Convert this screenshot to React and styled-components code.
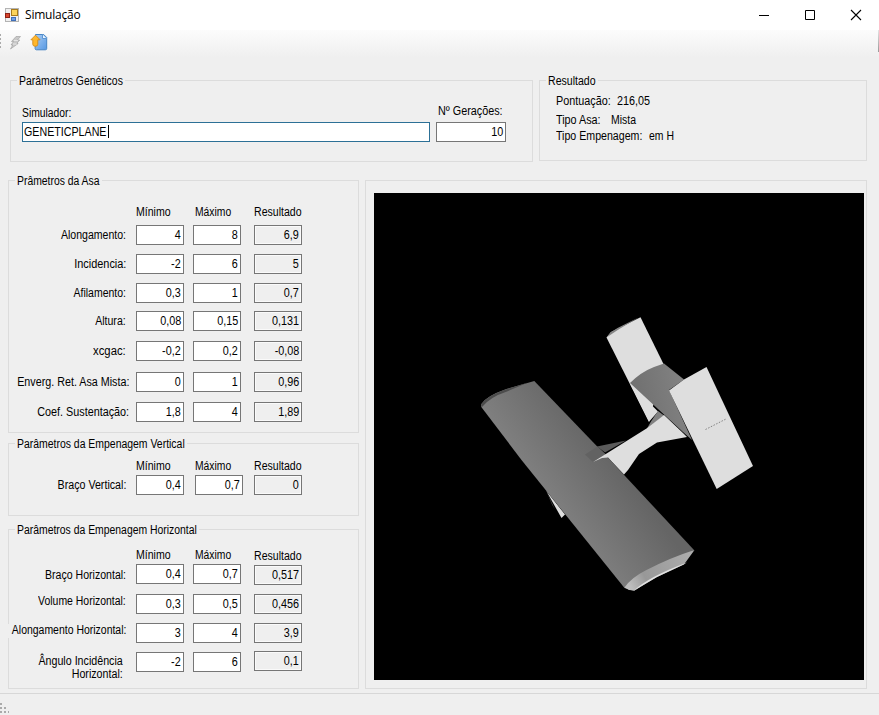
import React from "react";
import styled, { createGlobalStyle } from "styled-components";

const GlobalStyle = createGlobalStyle`
  * { box-sizing: border-box; }
  body { margin: 0; background: #efefef; overflow: hidden; }
`;

const Window = styled.div`
  width: 879px;
  height: 715px;
  display: flex;
  flex-direction: column;
  background: #efefef;
  color: #000;
  font: 12px/14px "Liberation Sans", Arial, sans-serif;
  white-space: pre;
`;

const TitleBar = styled.header`
  height: 30px;
  flex: none;
  display: flex;
  align-items: center;
  padding: 0 17px 1px 5px;
  background: #fff;
`;

const Title = styled.h1`
  margin: 1px 0 0 6px;
  flex: 1;
  font: 400 12px/16px "Open Sans", "Noto Sans", sans-serif;
  letter-spacing: -0.2px;
`;

const Controls = styled.div`
  display: flex;
  gap: 34px;
`;

const ToolBar = styled.div`
  height: 27px;
  flex: none;
  display: flex;
  justify-content: space-between;
  background: linear-gradient(#fcfcfc, #efefef);
`;

const ToolBarEnd = styled.div`
  width: 1px;
  height: 22px;
  background: linear-gradient(#e4e4e4, #999);
`;

const Content = styled.main`
  flex: 1;
  padding: 23px 0 0 8px;
  display: flex;
  flex-direction: column;
`;

const TopRow = styled.div`
  display: flex;
  gap: 6px;
  margin-left: 2px;
  height: 100px;
`;

const MainRow = styled.div`
  display: flex;
  gap: 6px;
`;

const Forms = styled.div`
  display: grid;
  grid-template-rows: 263px 86px 160px;
`;

const Group = styled.section`
  width: ${(p) => p.$w}px;
  height: ${(p) => p.$h}px;
  border: 1px solid #dcdcdc;
  display: flex;
  flex-direction: column;
  align-items: flex-start;
`;

const Legend = styled.h2`
  flex: none;
  height: 14px;
  width: ${(p) => p.$w}px;
  margin: -7px 0 0 6px;
  padding-left: 2px;
  font: inherit;
  background: #efefef;
`;

const Condensed = styled.span`
  display: inline-block;
  transform: scaleX(${(p) => p.$sx || 0.9});
  transform-origin: ${(p) => (p.$end ? "right" : "left")} center;
`;

const FormRow = styled.div`
  display: grid;
  grid-template-columns: 127px 57px 61px 48px;
  height: 20px;
  margin-top: ${(p) => p.$top}px;
`;

const RowLabel = styled.label`
  display: flex;
  justify-content: flex-end;
  text-align: right;
  height: 14px;
  margin: ${(p) => 4 + (p.$dy || 0)}px ${(p) => 10 - (p.$dx || 0)}px 0 0;
  line-height: 13px;
`;

const LabelBack = styled.span`
  flex: none;
  height: 14px;
  background: ${(p) => (p.$cover ? "#efefef" : "none")};
`;

const HeadCell = styled.div`
  padding: ${(p) => 3 + (p.$dy || 0)}px 0 0 ${(p) => p.$dx || 0}px;
`;

const Field = styled.div`
  width: ${(p) => p.$w || 48}px;
  height: 20px;
  margin: ${(p) => p.$dy || 0}px 0 0 ${(p) => p.$dx || 0}px;
  padding: 2px 2px 0 1px;
  display: flex;
  justify-content: ${(p) => (p.$start ? "flex-start" : "flex-end")};
  border: 1px solid ${(p) => (p.$active ? "#2c7096" : "#767676")};
  background: ${(p) => (p.$readOnly ? "#efefef" : "#fff")};
  box-shadow: ${(p) => (p.$readOnly ? "inset 0 0 0 1px #fafafa" : "none")};
`;

const Caret = styled.i`
  width: 1px;
  height: 13px;
  background: #000;
  margin-left: ${(p) => p.$pull}px;
`;

const InputRow = styled.div`
  display: flex;
  gap: 6px;
  margin: 16px 0 0 11px;
`;

const LabeledInput = styled.div`
  display: flex;
  flex-direction: column;
  padding-top: ${(p) => p.$top}px;
`;

const InputLabel = styled.label`
  height: ${(p) => p.$h}px;
  padding-left: ${(p) => p.$dx || 0}px;
`;

const ResultLine = styled.div`
  height: 14px;
  display: flex;
  margin: ${(p) => p.$top}px 0 0 16px;
`;

const ResultName = styled.span`
  width: ${(p) => p.$w}px;
`;

const Viewport = styled.div`
  width: 490px;
  height: 487px;
  margin: 12px 0 0 8px;
  background: #000;
  svg { display: block; }
`;

const StatusBar = styled.footer`
  height: 22px;
  flex: none;
  border-top: 1px solid #d7d7d7;
`;

function Txt({ children, sx, end }) {
  return <Condensed $sx={sx} $end={end}>{children}</Condensed>;
}

function AppIcon() {
  return (
    <svg width="14" height="14" viewBox="0 0 14 14">
      <rect x=".5" y=".5" width="13" height="13" fill="#f0f0f0" stroke="#b4b4b4" />
      <rect x="6.5" y="1.500" width="6" height="6" fill="#fbd45c" stroke="#a77b1d" />
      <rect x=".5" y="5.500" width="4" height="4" fill="#d8452c" stroke="#8e2116" />
      <rect x="6.500" y="9.500" width="4" height="3" fill="#6f9fe6" stroke="#3f6fb8" />
    </svg>
  );
}

function ToolIcons() {
  return (
    <svg width="60" height="27" viewBox="0 30 60 27">
      <defs>
        <linearGradient id="page" x1="0" x2="1" y2="1">
          <stop stopColor="#a9cdf6" />
          <stop offset="1" stopColor="#5798e2" />
        </linearGradient>
      </defs>
      <path d="M.5 34v2M.5 38v2M.5 42v2M.5 46v2" stroke="#aaa" />
      <path d="M16 36.500h4.500l-3 3.500h2.200l-3 3.500h1.500L10.500 49l2.300-4H11l2.500-3.500h-2z" fill="#c8c8c8" stroke="#9a9a9a" strokeWidth=".6" />
      <path d="M14 40.500h4M13 44h4" stroke="#eee" strokeWidth=".8" />
      <path d="M35.500 34.500h8.200l3 3v11a1.300 1.300 0 0 1-1.300 1.300h-9a1.300 1.300 0 0 1-1.300-1.300z" fill="url(#page)" stroke="#4684c4" />
      <path d="M42.500 34.500v4h4" fill="#e8f3ff" stroke="#5e96d0" />
      <path d="M35.500 35.200l4.600 4.600h-2.300v4.400a2 2 0 0 1-2 2h-1a2 2 0 0 1-2-1.800v-4.600h-1.900z" fill="#ffb72c" stroke="#d48b18" strokeWidth=".9" />
    </svg>
  );
}

function Aircraft() {
  return (
    <svg width="490" height="487" viewBox="374 193 490 487">
      <defs>
        <linearGradient id="wing" gradientUnits="userSpaceOnUse" x1="550" y1="500" x2="612" y2="455">
          <stop stopColor="#7f7f7f" />
          <stop offset="1" stopColor="#656565" />
        </linearGradient>
        <linearGradient id="tail" gradientUnits="userSpaceOnUse" x1="640" y1="395" x2="685" y2="385">
          <stop stopColor="#727272" />
          <stop offset="1" stopColor="#828282" />
        </linearGradient>
        <linearGradient id="tip" gradientUnits="userSpaceOnUse" x1="630" y1="585" x2="690" y2="555">
          <stop stopColor="#bdbdbd" />
          <stop offset=".25" stopColor="#989898" />
          <stop offset="1" stopColor="#acacac" />
        </linearGradient>
      </defs>
      <path d="M606.5 337.5L611 332 640.5 317.3 663.5 364 649 422z" fill="#dedede" />
      <path d="M606.5 337.5l4-5 7-4.5 21-10.5-20 12z" fill="#858585" />
      <path d="M630 383.5L658 411.5 649 421.7z" fill="#dedede" />
      <path d="M658 411l6 4.5-17 13 4-7z" fill="#818181" />
      <path d="M630 383q11-11 24-16l10-3.5 20 16-15 10.5 23 50-9-8-25-23z" fill="url(#tail)" />
      <path d="M546 490.5l19 24-3.5 3.5z" fill="#dedede" />
      <path d="M546 490.5l6 14 3 5z" fill="#555" />
      <path d="M481.3 407v-3q5-8 25-15l28-8 73.5 76.5L694 550l-60 41-9.5-3-103-128z" fill="url(#wing)" />
      <path d="M481 405q5-9 26-16l21-6.5-21 9q-17 5.5-25 15.5z" fill="#4c4c4c" />
      <path d="M597 446.5l29-6-21 12z" fill="#5b5b5b" />
      <path d="M585 454.5l12.5-8 8.5 8-13 7.5z" fill="#626262" />
      <path d="M593 462l53.5-33.5L664 415l19 18 4 4-30 5.5-18 11.5-11 16-4 4.5-16-17-6 .5z" fill="#dedede" />
      <path d="M624.5 587.5q7-10 21-17 25-13 49-20.5l-10.5 14.5L657 577l-22.5 13.5-5.5-.5z" fill="url(#tip)" />
      <path d="M634 590.5q15-14 53-28l-3.500 2L657 577z" fill="#e1e1e1" />
      <path d="M669 390.5l15-11 22.500-12.500L753 466l-36.300 23z" fill="#dedede" />
      <path d="M705.500 429.500L726 419" stroke="#777" strokeWidth=".9" strokeDasharray="1.500 1.500" />
    </svg>
  );
}

const wingRows = [
  { label: "Alongamento:", values: ["4", "8", "6,9"], top: 3, sx: 0.88 },
  { label: "Incidencia:", values: ["-2", "6", "5"], top: 9, sx: 0.91 },
  { label: "Afilamento:", values: ["0,3", "1", "0,7"], top: 9, sx: 0.875 },
  { label: "Altura:", values: ["0,08", "0,15", "0,131"], top: 8, sx: 0.88 },
  { label: "xcgac:", values: ["-0,2", "0,2", "-0,08"], top: 10, sx: 0.94 },
  { label: "Enverg. Ret. Asa Mista:", values: ["0", "1", "0,96"], top: 11, dx: 3, sx: 0.895 },
  { label: "Coef. Sustentação:", values: ["1,8", "4", "1,89"], top: 10, dx: 3 },
];

const verticalRows = [
  { label: "Braço Vertical:", values: ["0,4", "0,7", "0"], top: -1, maxDx: 2, sx: 0.89 },
];

const horizontalRows = [
  { label: "Braço Horizontal:", values: ["0,4", "0,7", "0,517"], top: -1, dy: 1, resultDy: 1, sx: 0.88 },
  { label: "Volume Horizontal:", values: ["0,3", "0,5", "0,456"], top: 10, dy: -3, sx: 0.87 },
  { label: "Alongamento Horizontal:", values: ["3", "4", "3,9"], top: 9, dy: -3, cover: true, sx: 0.872 },
  { label: "Ângulo Incidência\nHorizontal:", values: ["-2", "6", "0,1"], top: 9, dx: -3, dy: -1, resultDy: -1, sx: 0.89 },
];

function Headings({ top, resultDy }) {
  return (
    <FormRow $top={top}>
      <span />
      <HeadCell><Txt sx={0.88}>Mínimo</Txt></HeadCell>
      <HeadCell $dx={2}><Txt sx={0.86}>Máximo</Txt></HeadCell>
      <HeadCell $dy={resultDy}><Txt sx={0.88}>Resultado</Txt></HeadCell>
    </FormRow>
  );
}

function Rows({ rows }) {
  return rows.map((r) => (
    <FormRow key={r.label} $top={r.top}>
      <RowLabel $dx={r.dx} $dy={r.dy}>
        <LabelBack $cover={r.cover}><Txt end sx={r.sx}>{r.label}</Txt></LabelBack>
      </RowLabel>
      <Field><Txt end>{r.values[0]}</Txt></Field>
      <Field $dx={r.maxDx}><Txt end>{r.values[1]}</Txt></Field>
      <Field $readOnly $dy={r.resultDy}><Txt end>{r.values[2]}</Txt></Field>
    </FormRow>
  ));
}

export default function App() {
  return (
    <Window>
      <GlobalStyle />
      <TitleBar>
        <AppIcon />
        <Title>Simulação</Title>
        <Controls>
          <svg width="12" height="12"><path d="M1 6.500h10" stroke="#000" /></svg>
          <svg width="12" height="12"><path d="M1.500 1.500h9v9h-9z" fill="none" stroke="#000" /></svg>
          <svg width="12" height="12"><path d="M1 1l10 10M11 1L1 11" stroke="#000" strokeWidth="1.100" /></svg>
        </Controls>
      </TitleBar>
      <ToolBar>
        <ToolIcons />
        <ToolBarEnd />
      </ToolBar>
      <Content>
        <TopRow>
          <Group $w={523} $h={82}>
            <Legend $w={108}><Txt sx={0.87}>Parâmetros Genéticos</Txt></Legend>
            <InputRow>
              <LabeledInput $top={2}>
                <InputLabel $h={16}><Txt sx={0.86}>Simulador:</Txt></InputLabel>
                <Field $w={408} $active $start>
                  <Txt sx={0.89}>GENETICPLANE</Txt>
                  <Caret $pull={-9} />
                </Field>
              </LabeledInput>
              <LabeledInput $top={0}>
                <InputLabel $h={18} $dx={2}><Txt>Nº Gerações:</Txt></InputLabel>
                <Field $w={70}><Txt end>10</Txt></Field>
              </LabeledInput>
            </InputRow>
          </Group>
          <Group $w={328} $h={81}>
            <Legend $w={52}><Txt sx={0.88}>Resultado</Txt></Legend>
            <ResultLine $top={6}><ResultName $w={61}><Txt>Pontuação:</Txt></ResultName><Txt>216,05</Txt></ResultLine>
            <ResultLine $top={5}><ResultName $w={55}><Txt>Tipo Asa:</Txt></ResultName><Txt sx={0.87}>Mista</Txt></ResultLine>
            <ResultLine $top={2}><ResultName $w={93}><Txt sx={0.885}>Tipo Empenagem:</Txt></ResultName><Txt sx={0.87}>em H</Txt></ResultLine>
          </Group>
        </TopRow>
        <MainRow>
          <Forms>
            <Group $w={351} $h={253}>
              <Legend $w={87}><Txt sx={0.865}>Prâmetros da Asa</Txt></Legend>
              <Headings top={14} />
              <Rows rows={wingRows} />
            </Group>
            <Group $w={351} $h={73}>
              <Legend $w={172}><Txt sx={0.87}>Parâmetros da Empenagem Vertical</Txt></Legend>
              <Headings top={5} />
              <Rows rows={verticalRows} />
            </Group>
            <Group $w={351} $h={160}>
              <Legend $w={184}><Txt sx={0.867}>Parâmetros da Empenagem Horizontal</Txt></Legend>
              <Headings top={8} resultDy={1} />
              <Rows rows={horizontalRows} />
            </Group>
          </Forms>
          <Group $w={502} $h={509}>
            <Viewport><Aircraft /></Viewport>
          </Group>
        </MainRow>
      </Content>
      <StatusBar>
        <svg width="12" height="21">
          <path d="M0 9h2v2H0zM0 13h2v2H0zM0 17h2v2H0zM4 13h2v2H4zM4 17h2v2H4zM8 17h1v2H8z" fill="#aaa" />
        </svg>
      </StatusBar>
    </Window>
  );
}
